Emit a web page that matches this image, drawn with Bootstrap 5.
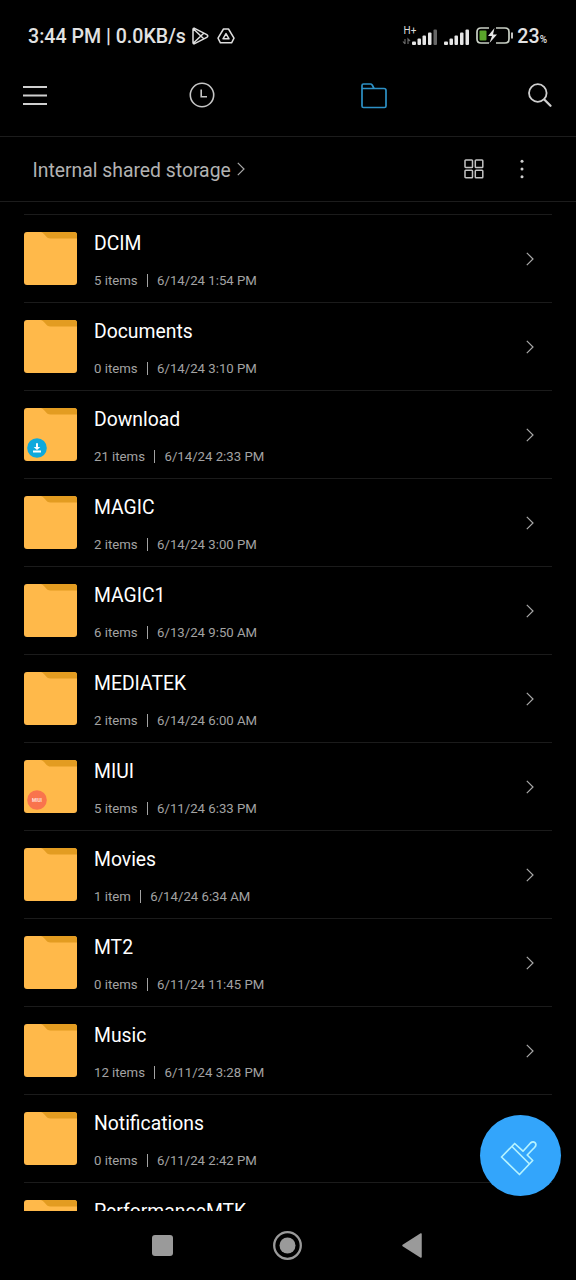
<!DOCTYPE html>
<html lang="en">
<head>
<meta charset="utf-8">
<meta name="viewport" content="width=device-width, initial-scale=1">
<title>File Manager</title>
<link href="https://cdn.jsdelivr.net/npm/bootstrap@5.3.0/dist/css/bootstrap.min.css" rel="stylesheet">
<style>
body{background:#000;color:#fff;font-family:Roboto,"Liberation Sans",sans-serif;line-height:1}
.screen{width:576px;height:1280px}
svg{display:block;flex:none;fill:none;overflow:visible}
.statusbar{height:72px;padding:0 29px 0 28px;color:#e2e2e2;font-weight:500;font-size:19.6px}
.statusbar span{padding-top:2px}
.statusbar span span{padding:0}
.tabs{height:65px;padding:18px 24px 0 23px;border-bottom:1px solid #1c1c1c}
.crumbs{height:65px;padding:0 52px 0 32.500px;border-bottom:1px solid #1c1c1c;color:#b2b2b2;font-size:19.350px}
.crumbs span{padding-top:3px}
.files{height:1009px;padding:12px 24px 0}
.file{height:88px;border-top:1px solid #1b1b1b;padding-right:18px}
.thumb{width:53px;height:53px;margin:0 17.500px 0 -.5px}
.tag{left:3px;bottom:3px;width:20px;height:20px}
.filetext{padding-top:5px}
.title{font-size:19.350px;line-height:24px;margin-bottom:16px}
.meta{font-size:13.200px;line-height:18px;color:#a3a3a3}
.meta i{width:1px;height:13px;background:#a3a3a3;margin:-2px 9.500px 0 9px}
.cleaner{left:480px;top:1115px;width:81px;height:81px;background:#33a5fb}
.navkeys{height:69px;padding:0 154px 0 152px}
</style>
</head>
<body>
<svg width="0" height="0" class="position-absolute" aria-hidden="true">
  <symbol id="folder" viewBox="0 0 53 53"><rect width="53" height="53" rx="3" fill="#ffb94a"/><path d="M17 0H50a3 3 0 0 1 3 3V6.500H26.500C21.500 6.500 21.500 1.500 17 0Z" fill="#e39c21"/></symbol>
  <symbol id="chevron" viewBox="0 0 8 14"><path d="M.8.8 7 7 .8 13.200" fill="none" stroke="#a8a8a8" stroke-width="1.200"/></symbol>
</svg>
<div class="screen position-relative overflow-hidden d-flex flex-column">
  <header class="statusbar d-flex align-items-center flex-shrink-0">
    <span class="text-nowrap">3:44 PM | 0.0KB/s</span>
    <svg style="margin-left:6px" width="17" height="18" viewBox="0 0 17 18" stroke="#dedede" stroke-width="1.500" stroke-linejoin="round"><path d="M1 2.500Q1 .8 2.600 1.300L14.800 7.600Q16.800 9 14.800 10.400L2.600 16.700Q1 17.200 1 15.500ZM1.500 2 12 12M1.500 16 12 6"/></svg>
    <svg class="ms-2" width="18" height="16" viewBox="0 0 18 16" stroke="#dedede" stroke-width="1.500" stroke-linejoin="round"><path d="M6.500 1h5L17 10.200 14.600 14.800H3.400L1 10.200ZM9 5.600 12 10.800H6Z"/></svg>
    <div class="ms-auto d-flex align-items-center">
      <svg width="35" height="21" viewBox="0 0 35 21"><text x="1.500" y="8" font-size="10" font-weight="400" fill="#dcdcdc">H+</text><path d="M3 13v5M1 15.500 3 18M6 18v-5l2 2" stroke="#686868" stroke-width="1.200"/><g fill="#e6e6e6"><rect x="10" y="15.500" width="4" height="3.500" rx="1"/><rect x="15.500" y="12.500" width="3.500" height="6.500" rx="1"/><rect x="20.500" y="9.500" width="3.500" height="9.500" rx="1"/><rect x="26" y="6.500" width="3.500" height="12.500" rx="1"/><rect x="31.500" y="3.500" width="3.500" height="15.500" rx="1" fill="#666"/></g></svg>
      <svg style="margin-left:6px" width="26" height="21" viewBox="0 0 26 21"><g fill="#e6e6e6"><rect x="1" y="15.500" width="4" height="3.500" rx="1"/><rect x="6.500" y="12.500" width="3.500" height="6.500" rx="1"/><rect x="11.500" y="9.500" width="3.500" height="9.500" rx="1"/><rect x="17" y="6.500" width="3.500" height="12.500" rx="1"/><rect x="22.500" y="3.500" width="3.500" height="15.500" rx="1"/></g></svg>
      <svg style="margin:-1px 0 0 7px" width="37" height="17" viewBox="0 0 37 17"><path d="M13 1H5Q1 1 1 5v7q0 4 4 4h8M20 1h9q4 0 4 4v7q0 4-4 4h-9" stroke="#c9d0c5" stroke-width="1.700"/><rect x="3.500" y="3.500" width="7" height="10" rx="1" fill="#5aa62b"/><path d="M18.500 1 12 9h4l-2.500 7L21 7.500h-4Z" fill="#e6e6e6"/><path d="M36 5.500v6" stroke="#d5d5d5" stroke-width="1.800"/></svg>
      <span style="margin-left:4px">23<span style="font-size:10px">%</span></span>
    </div>
  </header>
  <nav class="tabs d-flex justify-content-between align-items-start flex-shrink-0">
    <svg width="24" height="20" style="margin-top:-8px" viewBox="0 -5 24 20" stroke="#cfcfcf" stroke-width="2"><path d="M0 0h24M0 8.500h24M0 17h24"/></svg>
    <svg width="26" height="26" viewBox="0 0 26 26" stroke="#c6c6c6" stroke-width="1.600" style="margin:-8px 0 0 3px"><circle cx="13" cy="13" r="11.700"/><path d="M12.200 7.500v7.300H18"/></svg>
    <svg width="26" height="26" viewBox="0 0 26 26" stroke="#2d91c6" stroke-width="1.700" stroke-linejoin="round" style="margin:-7px 2px 0 8px"><path d="M1 5.500V2.500Q1 1 2.500 1h7q1 0 1.700 1l1.900 3.500H23q2 0 2 2V23q0 1.500-1.500 1.500h-21Q1 24.500 1 23V5.500H13"/></svg>
    <svg width="24" height="24" viewBox="0 0 24 24" stroke="#cfcfcf" stroke-width="1.800" stroke-linecap="round" style="margin-top:-7px"><circle cx="9.800" cy="10" r="8.800"/><path d="m16.500 16.700 6 6" stroke-width="2.300"/></svg>
  </nav>
  <nav class="crumbs d-flex align-items-center flex-shrink-0">
    <span>Internal shared storage</span>
    <svg width="8" height="14" style="margin-left:6px"><use href="#chevron"/></svg>
    <svg class="ms-auto" width="20" height="20" viewBox="0 0 20 20" stroke="#c4c4c4" stroke-width="1.500"><rect x="1" y="1" width="7.500" height="7.500" rx=".8"/><rect x="11.300" y="1" width="7.500" height="7.500" rx=".8"/><rect x="1" y="11.200" width="7.500" height="7.500" rx=".8"/><rect x="11.300" y="11.200" width="7.500" height="7.500" rx=".8"/></svg>
    <svg width="4" height="20" viewBox="0 0 4 20" style="margin-left:36.500px"><g fill="#cfcfcf"><circle cx="2" cy="2.200" r="1.500"/><circle cx="2" cy="10" r="1.500"/><circle cx="2" cy="17.800" r="1.500"/></g></svg>
  </nav>
  <main class="files overflow-hidden flex-shrink-0">
    <div class="file d-flex align-items-center"><svg class="thumb"><use href="#folder"/></svg><div class="filetext flex-grow-1"><div class="title">DCIM</div><div class="meta d-flex align-items-center">5 items<i></i>6/14/24 1:54 PM</div></div><svg width="8" height="14"><use href="#chevron"/></svg></div>
    <div class="file d-flex align-items-center"><svg class="thumb"><use href="#folder"/></svg><div class="filetext flex-grow-1"><div class="title">Documents</div><div class="meta d-flex align-items-center">0 items<i></i>6/14/24 3:10 PM</div></div><svg width="8" height="14"><use href="#chevron"/></svg></div>
    <div class="file d-flex align-items-center"><div class="thumb position-relative"><svg width="53" height="53"><use href="#folder"/></svg><svg class="tag position-absolute" viewBox="0 0 20 20"><circle cx="10" cy="10" r="9.800" fill="#0fa9dc"/><path d="M9 5.300h2v3.700h2.300L10 12 6.700 9H9ZM6 12.500h8v1.900H6Z" fill="#fff"/></svg></div><div class="filetext flex-grow-1"><div class="title">Download</div><div class="meta d-flex align-items-center">21 items<i></i>6/14/24 2:33 PM</div></div><svg width="8" height="14"><use href="#chevron"/></svg></div>
    <div class="file d-flex align-items-center"><svg class="thumb"><use href="#folder"/></svg><div class="filetext flex-grow-1"><div class="title">MAGIC</div><div class="meta d-flex align-items-center">2 items<i></i>6/14/24 3:00 PM</div></div><svg width="8" height="14"><use href="#chevron"/></svg></div>
    <div class="file d-flex align-items-center"><svg class="thumb"><use href="#folder"/></svg><div class="filetext flex-grow-1"><div class="title">MAGIC1</div><div class="meta d-flex align-items-center">6 items<i></i>6/13/24 9:50 AM</div></div><svg width="8" height="14"><use href="#chevron"/></svg></div>
    <div class="file d-flex align-items-center"><svg class="thumb"><use href="#folder"/></svg><div class="filetext flex-grow-1"><div class="title">MEDIATEK</div><div class="meta d-flex align-items-center">2 items<i></i>6/14/24 6:00 AM</div></div><svg width="8" height="14"><use href="#chevron"/></svg></div>
    <div class="file d-flex align-items-center"><div class="thumb position-relative"><svg width="53" height="53"><use href="#folder"/></svg><svg class="tag position-absolute" viewBox="0 0 20 20"><circle cx="10" cy="10" r="9.800" fill="#f9744d"/><text x="10" y="12" font-size="5.500" font-weight="700" text-anchor="middle" textLength="10" lengthAdjust="spacingAndGlyphs" fill="#ffe3da">MIUI</text></svg></div><div class="filetext flex-grow-1"><div class="title">MIUI</div><div class="meta d-flex align-items-center">5 items<i></i>6/11/24 6:33 PM</div></div><svg width="8" height="14"><use href="#chevron"/></svg></div>
    <div class="file d-flex align-items-center"><svg class="thumb"><use href="#folder"/></svg><div class="filetext flex-grow-1"><div class="title">Movies</div><div class="meta d-flex align-items-center">1 item<i></i>6/14/24 6:34 AM</div></div><svg width="8" height="14"><use href="#chevron"/></svg></div>
    <div class="file d-flex align-items-center"><svg class="thumb"><use href="#folder"/></svg><div class="filetext flex-grow-1"><div class="title">MT2</div><div class="meta d-flex align-items-center">0 items<i></i>6/11/24 11:45 PM</div></div><svg width="8" height="14"><use href="#chevron"/></svg></div>
    <div class="file d-flex align-items-center"><svg class="thumb"><use href="#folder"/></svg><div class="filetext flex-grow-1"><div class="title">Music</div><div class="meta d-flex align-items-center">12 items<i></i>6/11/24 3:28 PM</div></div><svg width="8" height="14"><use href="#chevron"/></svg></div>
    <div class="file d-flex align-items-center"><svg class="thumb"><use href="#folder"/></svg><div class="filetext flex-grow-1"><div class="title">Notifications</div><div class="meta d-flex align-items-center">0 items<i></i>6/11/24 2:42 PM</div></div></div>
    <div class="file d-flex align-items-center"><svg class="thumb"><use href="#folder"/></svg><div class="filetext flex-grow-1"><div class="title">PerformanceMTK</div><div class="meta">&nbsp;</div></div></div>
  </main>
  <footer class="navkeys d-flex align-items-center justify-content-between flex-shrink-0">
    <svg width="21" height="21"><rect width="21" height="21" rx="3" fill="#9a9a9a"/></svg>
    <svg width="29" height="29" viewBox="0 0 29 29"><circle cx="14.500" cy="14.500" r="13.300" stroke="#9a9a9a" stroke-width="2.300"/><circle cx="14.500" cy="14.500" r="8" fill="#9a9a9a"/></svg>
    <svg width="20" height="25" viewBox="0 0 20 25"><path d="M19 1v23L1 12.500Z" fill="#9a9a9a" stroke="#9a9a9a" stroke-width="1.500" stroke-linejoin="round"/></svg>
  </footer>
  <button type="button" class="cleaner btn border-0 rounded-circle position-absolute p-0" aria-label="Clean">
    <svg width="81" height="81" viewBox="0 0 81 81" stroke="#b5f3ff" stroke-width="1.700" stroke-linejoin="round" stroke-linecap="round"><path d="M21.500 42 34.700 28.500 43 36.200 50.500 28Q53 25.700 55 27.700T54.500 32.500L47.200 40 52.700 45.500 39.500 59.500ZM32 31.500 49.500 49"/></svg>
  </button>
</div>
<script src="https://cdn.jsdelivr.net/npm/bootstrap@5.3.0/dist/js/bootstrap.bundle.min.js"></script>
</body>
</html>
